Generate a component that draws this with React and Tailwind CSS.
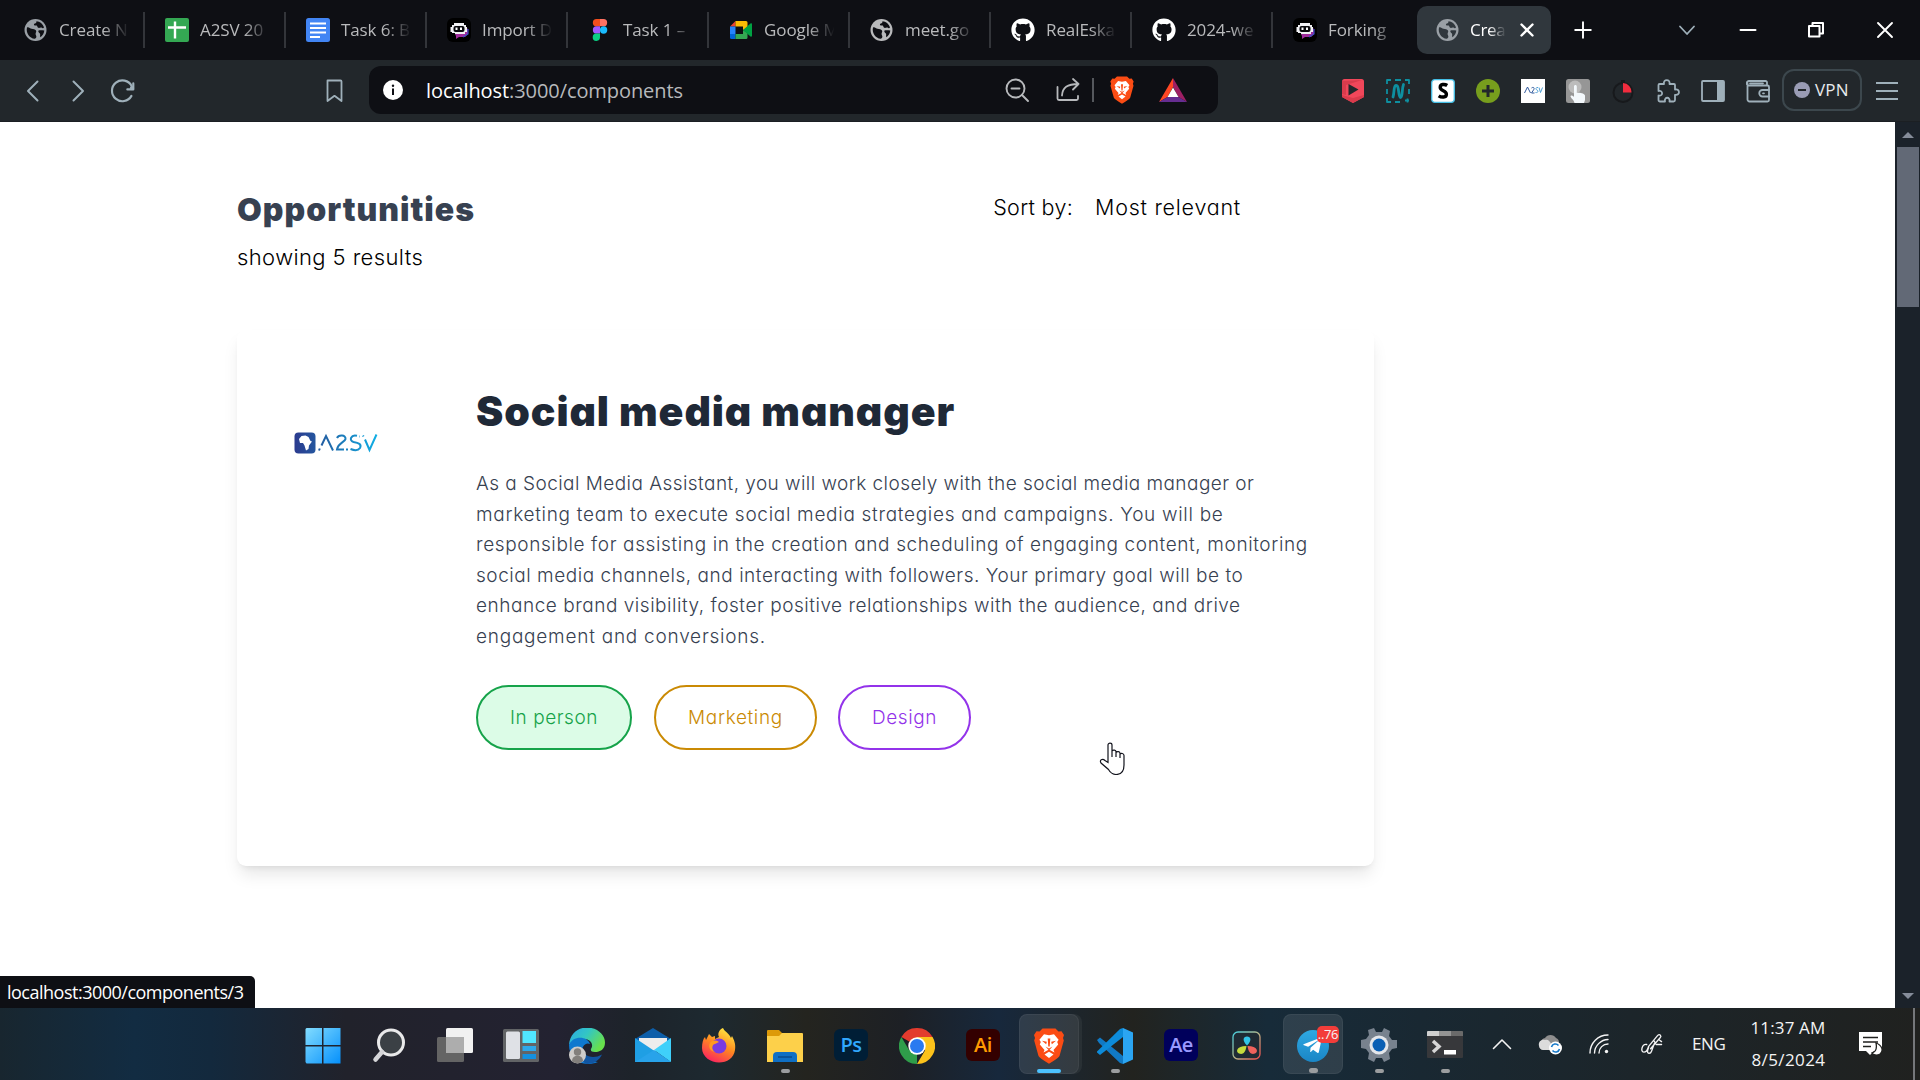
import React from "react";
import { FaGithub, FaTelegramPlane } from "react-icons/fa";

const Globe = ({ color = "#9aa0a6", bg = "#0e0f14" }) => (
  <svg viewBox="0 0 24 24" className="size-6 shrink-0">
    <circle cx="11.500" cy="12" r="11" fill={color} />
    <path d="M3 9.500c1.500-1 3 .8 4.500 1.300 2 .7 3.500.2 4.500 1.700.8 1.400-.6 2.300-.4 3.700.2 1.300 1.200 1.800.6 3.300-.4 1-1.500 1.300-1.500 1.300C5.500 20.300 1.700 15 3 9.500z" fill={bg} />
    <path d="M12.500 3.200c3.500.3 6.300 2.500 7.500 6-.5 1.400-1.600 1-2.500.4-1-.6-2 .6-3.200.2-1.300-.4-.6-1.600-1.600-2.200-1-.6-2.400.4-2.800-.9-.3-1.400 1.900-1.200 2.300-2z" fill={bg} />
    <path d="M14.500 12.500c1.500-.5 4-.2 5.800 0-.3 2.600-1.500 5-3.800 6.700-1-1.200.2-2.400-.6-3.600-.6-.9-2.200-1.800-1.400-3.100z" fill={bg} />
  </svg>
);

const Sheets = () => (
  <svg viewBox="0 0 24 24" className="size-6 shrink-0">
    <rect width="24" height="24" rx="2" fill="#34a853" />
    <path d="M10 3.500v17M3 9.500h18" stroke="#fff" strokeWidth="2.400" />
  </svg>
);
const Docs = () => (
  <svg viewBox="0 0 24 24" className="size-6 shrink-0">
    <rect width="24" height="24" rx="2.500" fill="#4285f4" />
    <path d="M4 5.500h16M4 10h16M4 14.500h16M4 19h10" stroke="#fff" strokeWidth="2" />
  </svg>
);
const Bot = () => (
  <svg viewBox="0 0 24 24" className="size-6 shrink-0">
    <rect width="24" height="24" rx="6" fill="#000" />
    <path d="M8 16h9l4-6v6l-3 3h-6l-3 2v-3z" fill="#a02c9c" />
    <path d="M16 19l5-3v-5" stroke="#3a4fc4" strokeWidth="1.200" fill="none" />
    <path d="M7 5h10v2h2v2h1v5h-2v2H8v-1H5v-1H3.500V9H5V7h2z" fill="#f1f1f4" />
    <rect x="6.500" y="8" width="11" height="6" rx="2" fill="#09090c" />
    <path d="M9.500 9.500v2.500M14 9.500v2.500" stroke="#fff" strokeWidth="2" />
  </svg>
);
const Figma = () => (
  <svg viewBox="0 0 24 24" className="size-6 shrink-0">
    <path d="M12 1H8.500a3.600 3.600 0 0 0 0 7.300H12z" fill="#f24e1e" />
    <path d="M12 1h3.500a3.600 3.600 0 0 1 0 7.300H12z" fill="#ff7262" />
    <path d="M12 8.300H8.500a3.600 3.600 0 0 0 0 7.300H12z" fill="#a259ff" />
    <circle cx="15.600" cy="12" r="3.650" fill="#1abcfe" />
    <path d="M12 15.600H8.500a3.650 3.650 0 1 0 3.500 3.700z" fill="#0acf83" />
  </svg>
);
const Meet = () => (
  <svg viewBox="0 0 24 24" className="size-6 shrink-0">
    <path d="M1 8.500L6.500 3v5.500z" fill="#ea4335" />
    <path d="M6.500 3H17a1.500 1.500 0 0 1 1.500 1.500V10L14 12V8.500H6.500z" fill="#fbbc04" />
    <path d="M1 8.500h5.500v7.500H1z" fill="#2684fc" />
    <path d="M1 16h5.500v5h-4A1.500 1.500 0 0 1 1 19.500z" fill="#0066da" />
    <path d="M6.500 16H14v-4l4.500 3v4.500A1.500 1.500 0 0 1 17 21H6.500z" fill="#34a853" />
    <path d="M14 12l7.500-6.500c.7-.5 1.500 0 1.500.7v11.600c0 .7-.8 1.200-1.500.7z" fill="#00a243" />
  </svg>
);
const Hub = () => <FaGithub className="size-6 shrink-0 text-white" />;

const tabs = [
  [Globe, "Create N"],
  [Sheets, "A2SV 20"],
  [Docs, "Task 6: B"],
  [Bot, "Import D"],
  [Figma, "Task 1 –"],
  [Meet, "Google M"],
  [() => <Globe color="#b9babc" />, "meet.go"],
  [Hub, "RealEska"],
  [Hub, "2024-we"],
  [Bot, "Forking"],
];

function Line({ d, className, w = 1.6, box = "0 0 24 24", children }) {
  return (
    <svg viewBox={box} className={`shrink-0 ${className}`} fill="none" stroke="currentColor" strokeWidth={w} strokeLinecap="round" strokeLinejoin="round">
      {d && <path d={d} />}
      {children}
    </svg>
  );
}

function TabStrip() {
  return (
    <div className="flex h-[60px] shrink-0 items-center bg-[#0e0f14] pl-1 text-white">
      {tabs.map(([Icon, label], i) => (
        <div key={label} className={`flex h-9 w-[141px] shrink-0 items-center border-r-2 pl-5 ${i === 9 ? "border-transparent" : "border-[#33353a]"}`}>
          <Icon />
          <div className="ml-[11px] w-[76px] text-[17px] tracking-[-0.1px] whitespace-nowrap text-[#b9babc] [mask-image:linear-gradient(to_right,black_58%,transparent_93%)]">
            {label}
          </div>
        </div>
      ))}
      <div className="ml-[3px] flex h-12 w-[134px] shrink-0 items-center rounded-[10px] bg-[#30373d] pl-[19px]">
        <Globe bg="#30373d" />
        <div className="ml-[10px] w-[38px] text-[17px] tracking-[-0.3px] whitespace-nowrap text-white [mask-image:linear-gradient(to_right,black_50%,transparent_95%)]">
          Crea
        </div>
        <Line d="M6.500 6.500l11 11M17.500 6.500l-11 11" w={2.4} className="ml-[7px] size-6" />
      </div>
      <Line d="M12 4.200v15.600M4.200 12h15.600" w={1.9} className="ml-5 size-6" />
      <Line d="M5 8.500l7 7.500 7-7.500" w={1.8} className="ml-[80px] size-6 text-[#9fb0ba]" />
      <Line d="M4.500 12h15" w={2} className="ml-[37px] size-6" />
      <Line className="ml-[44px] size-6" w={2}>
        <rect x="5" y="8" width="10.500" height="10.500" />
        <path d="M8.500 7.500V5h10.500v10.500h-3" />
      </Line>
      <Line d="M5 5l14 14M19 5L5 19" w={1.9} className="ml-[45px] size-6" />
    </div>
  );
}

function Toolbar() {
  return (
    <div className="flex h-[62px] shrink-0 items-center border-b border-[#1b1f23] bg-[#22272b] text-[#9fb0ba]">
      <Line d="M16.500 2.500L7 12l9.500 9.500" w={2} className="ml-[21px] size-6" />
      <Line d="M7.500 2.500L17 12l-9.500 9.500" w={2} className="ml-[21px] size-6" />
      <Line className="ml-5 size-[26px]" w={2}>
        <path d="M19.800 16.500A9.600 9.600 0 1 1 20 7.500" />
        <circle cx="20.300" cy="9.300" r="2" fill="currentColor" stroke="none" />
        <path d="M21.500 5v5.500H16" w={1} />
      </Line>
      <Line d="M4.500 1.500h13a1 1 0 0 1 1 1v19.500l-7-5.200-7 5.200V2.500z" w={1.8} className="ml-[187px] size-6" />
      <div className="mb-[1px] ml-[22px] flex h-12 w-[849px] shrink-0 items-center rounded-[12px] bg-[#0e0f14] pl-[14px] text-[#b7b9bc]">
        <svg viewBox="0 0 20 20" className="size-5">
          <circle cx="10" cy="10" r="10" fill="#fff" />
          <path d="M10 8.500v6.500" stroke="#0e0f14" strokeWidth="2" />
          <circle cx="10" cy="5.700" r="1.200" fill="#0e0f14" />
        </svg>
        <div className="ml-[23px] w-[558px] pt-[2px] text-[20px] leading-7 tracking-[-0.08px] whitespace-nowrap">
          <span className="text-white">localhost</span>:3000/components
        </div>
        <Line className="ml-[21px] size-6" w={1.9}>
          <circle cx="10.500" cy="10.500" r="9" />
          <path d="M17 17l6 6M6.500 10.500h8" />
        </Line>
        <Line className="ml-[27px] size-6" w={1.8}>
          <path d="M1.500 9v11.500A1.500 1.500 0 0 0 3 22h17.500a1.500 1.500 0 0 0 1.500-1.500V18" />
          <path d="M6 17.500C6.500 9.500 11 6 22.500 6M17 1l5.500 5-5.500 5.500" />
        </Line>
        <div className="ml-3 h-6 w-[2px] bg-[#55585d]" />
        <BraveLogo className="ml-[14px] size-7" />
        <svg viewBox="0 0 28 24" className="ml-[23px] h-6 w-7">
          <path d="M14 0L0 24l8.500-5L14 9z" fill="#ff4724" />
          <path d="M14 0l14 24-8.500-5L14 9z" fill="#9e1f63" />
          <path d="M0 24l8.500-5h11L28 24z" fill="#662d91" />
          <path d="M14 9.500l5.500 9.500h-11z" fill="#fff" />
        </svg>
      </div>
      <div className="ml-[123px] flex w-[429px] shrink-0 justify-between">
        <svg viewBox="0 0 24 24" className="size-6">
          <path d="M1 2.500Q1 0 3.500 0h17Q23 0 23 2.500V18l-11 6L1 18z" fill="#f0475a" />
          <path d="M1 16l11 3 11-3v2l-11 6-11-6zM1 2l20-1L5 6v10l-4-1z" fill="#d93b4c" />
          <path d="M7.500 5v11.500l10-6z" fill="#22272b" />
        </svg>
        <Line className="size-6 text-[#0e8fa0]" w={1.8}>
          <path d="M1 5V1h4M9 1h6M19 1h4v4M23 10v5M1 10v5M1 19v4h4M9 23h5M19 21.500h4M21.500 19.500v4" strokeLinecap="butt" />
          <path d="M7 18C8.500 13 7.500 8 9.500 6.500c4-2 2.500 12 5 12 2.500-.5 1-8 3-13" strokeWidth="2.800" />
        </Line>
        <svg viewBox="0 0 24 24" className="size-6">
          <rect x=".7" y=".7" width="22.600" height="22.600" rx="3" fill="#fff" stroke="#45bfe6" strokeWidth="1.300" />
          <path d="M16.200 6.500c-2.500-1.700-7-1.500-7 1.700 0 4 6.200 3 6.200 7 0 3.600-5 3.400-7.700 1.600" fill="none" stroke="#000" strokeWidth="3.400" />
        </svg>
        <svg viewBox="0 0 24 24" className="size-6">
          <circle cx="12" cy="12" r="12" fill="#779e1d" />
          <path d="M12 6v12M6 12h12" stroke="#22272b" strokeWidth="3" />
        </svg>
        <svg viewBox="0 0 24 24" className="size-6">
          <path d="M0 0h24v24H0z" fill="#fff" />
          <path d="M3.500 14L6.500 8l3 6M10.500 9c2-1.500 3.500 0 2 2l-2 3h3" fill="none" stroke="#30599d" strokeWidth="1" />
          <path d="M17 8.500c-2.500-.5-2.500 2-1 2.500s1.500 3-1.500 2.500M18 8.500l1.500 5 2-5" fill="none" stroke="#4d9ed4" strokeWidth="1" />
        </svg>
        <svg viewBox="0 0 24 24" className="size-6">
          <rect width="24" height="24" rx="2.500" fill="#969696" />
          <circle cx="9" cy="8" r="6.500" fill="#bcbcbc" />
          <path d="M8 7.500c0-2 2.800-2 2.800 0V14c2.500-1 8 .5 8.200 2.500V21l-1 3H8.500c-.5-3-3-4-4-6.500 0-1.500 2-1.500 3.500.5z" fill="#f3f8fc" />
        </svg>
        <svg viewBox="0 0 24 24" className="size-6">
          <circle cx="12" cy="13.500" r="9.500" fill="none" stroke="#17191c" strokeWidth="2" />
          <path d="M10 1h4v3h-4z" fill="#17191c" />
          <path d="M12 4a9 9 0 0 1 8.500 9.500H12z" fill="#f12c3e" />
        </svg>
        <Line className="size-6" w={1.8} d="M3.500 5H8C6.800-.3 14.700-.3 13.500 5H18a1 1 0 0 1 1 1v4.500c5.300-1.200 5.300 6.500 0 5.300V21a1.500 1.500 0 0 1-1.500 1.500h-4c1.200-5-5.700-5-4.500 0H4A1.500 1.500 0 0 1 2.500 21v-4.500c4.800 1.200 4.800-5.700 0-4.500V6a1 1 0 0 1 1-1z" />
        <svg viewBox="0 0 24 24" className="size-6">
          <rect x="1" y="2" width="22" height="20" rx="1" fill="none" stroke="currentColor" strokeWidth="1.800" />
          <path d="M16 2h7v20h-7z" fill="currentColor" />
        </svg>
        <Line className="size-6" w={1.800}>
          <path d="M21 6V3.500A1.500 1.500 0 0 0 19.500 2H3a1.800 1.800 0 0 0 0 4.500h18.500A1.500 1.500 0 0 1 23 8v13a1.500 1.500 0 0 1-1.500 1.500h-18A2 2 0 0 1 1.500 20.500V4M4 4.300h13" />
          <path d="M23 11h-6.500a3 3 0 0 0 0 6.500H23M17 14.300h1" />
        </Line>
      </div>
      <div className="mb-[1px] ml-[12px] flex h-[42px] w-[80px] shrink-0 items-center rounded-[12px] border-2 border-[#3c474d] pl-[10px]">
        <svg viewBox="0 0 16 16" className="size-4">
          <circle cx="8" cy="8" r="8" fill="#9a9cb5" />
          <path d="M4 8h8" stroke="#22272b" strokeWidth="2" />
        </svg>
        <span className="ml-[5px] text-[17px] leading-6 tracking-[0.2px] text-[#e8eaec]">VPN</span>
      </div>
      <div className="ml-[14px] flex h-[18px] w-[22px] flex-col justify-between">
        <div className="h-[2px] bg-current" /><div className="h-[2px] bg-current" /><div className="h-[2px] bg-current" />
      </div>
    </div>
  );
}

function BraveLogo({ className }) {
  return (
    <svg viewBox="0 0 36 36" className={className}>
      <path d="M11.500.5h13l3 3 3-.3L33 7l-1 3 .8 2.500L28.500 28Q27.500 30 18 35.800 8.500 30 7.500 28L3.200 12.500 4 10 3 7l2.500-3.800 3 .3z" fill="#fb4c14" />
      <path d="M18 7.300l5-1 4.600 5.500-1.400 2.200 1 2.500-4.700 5.500 1 2.500L18 21.600l-5.500 2.900 1-2.500-4.700-5.500 1-2.500-1.400-2.200L13 6.300z" fill="#fff" />
      <path d="M18 23.800l4.500 2.700L18 30l-4.500-3.500z" fill="#fff" />
      <path d="M11 12.800l4.800 1-.6 2.400zM25 12.800l-4.800 1 .6 2.400zM16.700 10.500h2.600l-.6 8h-1.400zM14.500 18.500l3.500 1.900 3.500-1.900-3.500 4z" fill="#fb4c14" />
    </svg>
  );
}

function A2svLogo() {
  return (
    <svg viewBox="0 0 84 22" className="h-[22px] w-[84px]">
      <defs>
        <linearGradient id="a2sv" gradientUnits="userSpaceOnUse" x1="0" x2="84" y1="0" y2="0">
          <stop offset="0" stopColor="#2b3a8e" />
          <stop offset=".4" stopColor="#2166a8" />
          <stop offset="1" stopColor="#10b0e6" />
        </linearGradient>
      </defs>
      <rect x=".5" y=".5" width="21" height="21" rx="4" fill="url(#a2sv)" />
      <path d="M5 7l2.500-3 4-.5 3 1.500 2 4 1.500.5-3 4-.5 3.500L12 18.500l-1.500-5L9 11H6z" fill="#fff" />
      <g fill="none" stroke="url(#a2sv)" strokeWidth="2">
        <path d="M25 18.500l.8-2M27.500 13.500L32 4l7 14.500" />
        <path d="M43 6c1.500-3.500 9-3.500 8.500 1-.5 3-7.500 4-8.500 10.500h7M52 17.500h2" />
        <path d="M66 4.500h-.5M63 3.800c-6-1.500-8.500 4.500-3.500 6.200 5 1 8.500 2 6.500 6-2 3-7 2-9.500 1" />
        <path d="M69 3.500l.5 1M71 7.500l4.500 10.500 7-15.500" />
      </g>
    </svg>
  );
}

const description = [
  ["As a Social Media Assistant, you will work closely with the social media manager or", "tracking-[0.45px]"],
  ["marketing team to execute social media strategies and campaigns. You will be", "tracking-[0.7px]"],
  ["responsible for assisting in the creation and scheduling of engaging content, monitoring", "tracking-[0.62px]"],
  ["social media channels, and interacting with followers. Your primary goal will be to", "tracking-[0.54px]"],
  ["enhance brand visibility, foster positive relationships with the audience, and drive", "tracking-[0.53px]"],
  ["engagement and conversions.", "tracking-[0.76px]"],
];

function Page() {
  return (
    <div className="flex h-[886px] shrink-0">
      <main className="relative flex flex-1 flex-col overflow-hidden bg-white pl-[237px] font-['Inter',sans-serif] [font-feature-settings:'cv11']">
        <div className="mt-[66px] flex w-[1004px] justify-between">
          <div>
            <h1 className="text-[32px] leading-[44px] font-black tracking-[1px] text-[#374151]">Opportunities</h1>
            <p className="mt-[3px] text-[22px] leading-[44px] font-light tracking-[0.4px] text-black">showing 5 results</p>
          </div>
          <div className="flex h-[38px] items-center gap-[22px] text-[21.500px] font-light text-black">
            <span className="tracking-[0.3px]">Sort by:</span>
            <span className="tracking-[0.76px]">Most relevant</span>
          </div>
        </div>
        <section className="mt-[51px] flex h-[536px] w-[1137px] rounded-[9px] bg-white shadow-[0_11px_17px_-3px_rgb(0_0_0/0.1),0_4px_7px_-4px_rgb(0_0_0/0.1)]">
          <div className="w-[239px] pt-[102px] pl-[57px]"><A2svLogo /></div>
          <div className="pt-[55px]">
            <h2 className="text-[41px] leading-[52px] font-black tracking-[0.92px] whitespace-nowrap text-[#1f2937]">Social media manager</h2>
            <div className="mt-[32px] text-[19px] leading-[30.600px] font-light whitespace-nowrap text-[#374151]">
              {description.map(([t, c]) => (
                <div key={t}><span className={c}>{t}</span></div>
              ))}
            </div>
            <div className="mt-[32px] flex gap-[22px] text-[19px] font-light">
              <span className="flex h-[65px] w-[156px] items-center justify-center rounded-full border-2 border-[#16a34a] bg-[#dcfce7] pt-[2px] tracking-[0.55px] text-[#16a34a]">In person</span>
              <span className="flex h-[65px] w-[163px] items-center justify-center rounded-full border-2 border-[#ca8a04] pt-[2px] tracking-[0.65px] text-[#ca8a04]">Marketing</span>
              <span className="-ml-px flex h-[65px] w-[133px] items-center justify-center rounded-full border-2 border-[#9333ea] pt-[2px] tracking-[0.55px] text-[#9333ea]">Design</span>
            </div>
          </div>
        </section>
        <svg viewBox="0 0 26 33" className="absolute top-[620px] left-[1099px] h-[33px] w-[26px]">
          <path d="M9 20.500V3c0-2.500 4-2.500 4 0v12V9c1-1.500 4-1 4 .8V15v-4.500c1-1.500 4-1 4 .8V16v-4c1-1 4-.8 4 1.500v9.500c0 12-12 11.500-15.500 4.500L2 21c-2-3 1.500-5 4-2.500z" fill="#fff" stroke="#12131c" strokeWidth="1.200" />
        </svg>
        <div className="absolute bottom-0 left-0 flex h-8 w-[255px] items-center rounded-tr-[5px] bg-[#0e0f14] pl-[7px] font-['Open_Sans',sans-serif] text-[18px] tracking-[-0.5px] whitespace-nowrap text-white">
          localhost:3000/components/3
        </div>
      </main>
      <div className="flex w-[25px] shrink-0 flex-col items-center justify-between bg-[#1b222a] pt-[10px] pb-[9px]">
        <div className="flex flex-col items-center">
          <svg viewBox="0 0 12 6" className="h-[6px] w-3"><path d="M0 6l6-6 6 6z" fill="#858c99" /></svg>
          <div className="mt-[9px] h-[160px] w-[22px] bg-[#626976]" />
        </div>
        <svg viewBox="0 0 12 6" className="h-[6px] w-3"><path d="M0 0l6 6 6-6z" fill="#858c99" /></svg>
      </div>
    </div>
  );
}

const Adobe = ({ bg, fg, children }) => (
  <div className={`mb-[3px] flex h-8 w-[34px] items-center justify-center rounded-md text-[20px] leading-none font-semibold tracking-tight ${bg} ${fg}`}>{children}</div>
);

const I = ({ children }) => <svg viewBox="0 0 36 36" className="size-9">{children}</svg>;

const apps = [
  { icon: <I><defs><linearGradient id="win" x2="1" y2="1"><stop stopColor="#82dcff" /><stop offset="1" stopColor="#0590fb" /></linearGradient></defs><path d="M1.500 0H17v17H.5V1zM18.500 0h17v17h-17zM.5 18.500H17v17H1.500L.5 34zM18.500 18.500h17v17h-17z" fill="url(#win)" /></I> },
  { icon: <I><circle cx="20" cy="14.500" r="12.500" fill="#3b4045" stroke="#e9e9ea" strokeWidth="3" /><path d="M11 24l-6.500 7.500" stroke="#d5d5d8" strokeWidth="4.500" strokeLinecap="round" /></I> },
  { icon: <I><rect x="0" y="9" width="27" height="25" rx="1.500" fill="#646464" /><rect x="9" y="0" width="27" height="25" rx="1.500" fill="#f1f1f1" /><path d="M9 9h18v16H9z" fill="#adadad" /></I> },
  { icon: <I><rect x="0" y="1" width="36" height="33" rx="1.500" fill="#626466" /><rect x="3" y="3.500" width="14" height="27.500" rx="1.500" fill="#dfe1e6" /><path d="M19.500 3H33v12H19.500z" fill="#50e6ff" /><path d="M19.500 18H33v5H19.500z" fill="#2ea8ea" /><path d="M19.500 26H33v5H19.500z" fill="#1490df" /></I> },
  { icon: <I><defs><linearGradient id="edg" x2="1" y2=".5"><stop stopColor="#2aa8e8" /><stop offset=".5" stopColor="#33c6c4" /><stop offset="1" stopColor="#68e04c" /></linearGradient></defs><path d="M0 17C1 5 9-.5 18.500-.5 29 0 36 7 36 14.500c0 7-5 9.500-10 9.500-4 0-5-2-3.500-4 2-4-1-9-7.500-9S2 14 0 17z" fill="url(#edg)" /><path d="M0 17c3-9 18-10 21-1-4-2-9 2-7 8 2 5 9 9.500 15 10-4 1.500-7 2-10 2C7 36 0 27 0 17z" fill="#0f79cf" /><path d="M14 19c-2 9 10 13 19 7.500C30 33 24 36 18 36c-8-3-9-13-4-17z" fill="#1155a2" /><circle cx="8.500" cy="27" r="8.500" fill="#ceccca" /><circle cx="8.500" cy="24" r="3.700" fill="#827f7c" /><path d="M3 33c0-7 11-7 11 0-3 3-8 3-11 0z" fill="#827f7c" /></I> },
  { icon: <I><path d="M0 11L18 0l18 11v10H0z" fill="#0d5ea9" /><path d="M4 10h28v10L18 24 4 18z" fill="#ededed" /><path d="M0 10l36 24H0z" fill="#1f9fe4" /><path d="M36 10v24L19 22z" fill="#3fd0fa" /><path d="M0 34l19-12 17 12z" fill="#28a3ea" /></I> },
  { icon: <I><defs><linearGradient id="ffx" x1=".8" x2=".3" y2="1"><stop stopColor="#ffee45" /><stop offset=".5" stopColor="#ff8a1f" /><stop offset="1" stopColor="#fb2260" /></linearGradient></defs><path d="M22 0c1 3 6 5 8 10l1-2c2 4 4 8 3 14-1 8-8 12.500-16 12.500S1 29 1 20c0-5 1-9 3-11l1 3 3-6 3 3 3-1v3l4-2c-2-4 1-8 4-9z" fill="url(#ffx)" /><circle cx="18" cy="18" r="7.500" fill="#7a3be0" /><path d="M9 15c3-3 6-3 9-1l-4 2c-3 0-4 6 0 8-5-1-7-5-5-9z" fill="#ff9a20" /></I> },
  { dot: true, icon: <I><path d="M0 3q0-1 1-1h11l3 3v5H0z" fill="#dd9a08" /><path d="M0 8h12l3-3h20q1 0 1 1v28H0z" fill="#fdd04a" /><path d="M6 34v-6q0-4 4-4h16q4 0 4 4v6z" fill="#0f6fc4" /><path d="M11 29h14" stroke="#0a4a8c" strokeWidth="1.500" /></I> },
  { icon: <Adobe bg="bg-[#001e36]" fg="text-[#31a8ff]">Ps</Adobe> },
  { icon: <I><path d="M18 18L2.410 9A18 18 0 0 1 33.590 9z" fill="#e33b2e" /><path d="M18 18L18 36A18 18 0 0 1 2.410 9L10 22z" fill="#2f9d4a" /><path d="M18 9h15.590A18 18 0 0 1 18 36l8-13.500z" fill="#fcc21b" /><circle cx="18" cy="18" r="8.700" fill="#fff" /><circle cx="18" cy="18" r="7" fill="#2a7af0" /></I> },
  { icon: <Adobe bg="bg-[#330000]" fg="text-[#ff9a00]">Ai</Adobe> },
  { active: true, icon: <BraveLogo className="size-9" /> },
  { dot: true, icon: <I><path d="M26 0v36l-3-1L2 15l-2-3 3-2.500L26 28z" fill="#1179c4" /><path d="M26 9L3 27l-3-2.500v-1L23 1l3-1z" fill="#0d8bd9" /><path d="M26 0l10 4.500v27L26 36z" fill="#2ba5f2" /></I> },
  { icon: <Adobe bg="bg-[#00005b]" fg="text-[#9999ff]">Ae</Adobe> },
  { icon: <I><defs><linearGradient id="dvr" x2="1" y2="1"><stop stopColor="#46d0e0" /><stop offset=".5" stopColor="#b7b78b" /><stop offset="1" stopColor="#f04a4a" /></linearGradient></defs><rect x="4" y="4" width="27" height="27" rx="5" fill="#1f2b34" stroke="url(#dvr)" strokeWidth="1.300" /><path d="M18 17.500c-5-5-4-9 0-9s5 4 0 9z" fill="#32c4e8" /><path d="M17.500 18c-1 7-4 9-7.500 7.500s-3-7.500 7.500-7.500z" fill="#c5dc3d" /><path d="M18.500 18c1 7 4 9 7.500 7.500s3-7.500-7.500-7.500z" fill="#f0625c" /></I> },
  { dot: true, telegram: true, icon: <div className="flex size-8 items-center justify-center rounded-full bg-linear-to-b from-[#2fa9e2] to-[#1a86c6] pr-0.5"><FaTelegramPlane className="size-[21px] text-white" /></div> },
  { dot: true, icon: <I><path d="M13 0l2 4h6l2-4 6 3-1 5 3 4h5v8l-5 1-3 4 1 6-6 3-2-4h-6l-2 4-6-3 1-6-3-4-5-1v-8l5-1 3-4-1-5z" fill="#78828e" /><circle cx="18" cy="17" r="9.500" fill="#e4e6ea" /><circle cx="18" cy="17" r="6.500" fill="#0a5fb4" /></I> },
  { dot: true, icon: <I><path d="M0 4q0-1 1-1h34q1 0 1 1v25q0 1-1 1H1q-1 0-1-1z" fill="#37383b" /><path d="M0 8V4q0-1 1-1h11v5z" fill="#cfcfcf" /><path d="M12 3h12v5H12z" fill="#949494" /><path d="M24 3h11q1 0 1 1v4H24z" fill="#6a6a6a" /><path d="M6 13l6 5.500L6 24" fill="none" stroke="#d6d6d6" strokeWidth="3.500" /><path d="M17 22h12v4.500H17z" fill="#fff" /></I> },
];

function Taskbar() {
  return (
    <footer className="flex h-[72px] shrink-0 items-center bg-[linear-gradient(90deg,#18262f_0%,#122c42_7%,#13293d_11%,#21222b_18%,#232231_29%,#1d232a_33%,#1d2930_37%,#24241f_42%,#1d2025_47%,#17283c_52%,#22231f_59%,#172b39_66%,#192832_74%,#20211f_100%)] pl-[290px] text-[#f4f4f4]">
      {apps.map((a, i) => (
        <div key={i} className="flex h-[72px] w-[66px] shrink-0 items-center justify-center">
          <div className={`relative flex h-[60px] w-[60px] flex-col items-center rounded-lg border pt-[13px] ${a.active ? "border-white/5 bg-white/10 shadow-[3px_0_0_rgb(255_255_255/0.05)]" : a.telegram ? "border-white/5 bg-white/10" : "border-transparent"}`}>
            <div className="flex h-9 items-center justify-center">{a.icon}</div>
            {a.dot && <div className="mt-[5px] h-[5px] w-[9px] rounded-full bg-[#9b9d9f]" />}
            {a.active && <div className="mt-[5px] h-[5px] w-6 rounded-full bg-[#4cc2ff]" />}
            {a.telegram && <div className="absolute top-[11px] right-[3px] h-[17px] w-[22px] rounded-[5px] bg-[#f33d3a] text-center text-[13px] leading-[17px] tracking-tight">..76</div>}
          </div>
        </div>
      ))}
      <Line d="M3.500 16.500L12 8l8.500 8.500" w={1.600} className="ml-3 size-6" />
      <svg viewBox="0 0 24 22" className="ml-[24px] h-[22px] w-6">
        <path d="M4 15a6 6 0 0 1 3-10 6.500 6.500 0 0 1 11 0c4 1 4 8 0 10z" fill="#8e8e8e" />
        <path d="M1 13c-1-5 3-7 6-6 2-1 6 1 6 5v5H5c-2 0-4-2-4-4z" fill="#dcdcdc" />
        <circle cx="17.500" cy="15" r="6.500" fill="#fff" />
        <path d="M13.500 14a4 4 0 0 1 7-1.500M21.500 16a4 4 0 0 1-7 1.500" stroke="#1779c9" strokeWidth="1.600" fill="none" />
      </svg>
      <Line className="ml-[27px] size-5" w={1.400} box="0 0 20 20">
        <path d="M1 19C1 9 9 1 19 1M5.500 19C5.500 12 12 5.500 19 5.500M10 19c0-5 4-9 9-9" /><circle cx="17.500" cy="17.500" r="1.700" fill="currentColor" stroke="none" />
      </Line>
      <Line className="ml-[31px] size-[23px]" w={1.400} d="M7 12c-5-1-7 8-3 8s4-4 5-6L18.500 2.500c2-2 4.500.5 2.500 2.500L11 16.500M9 15l-1 3c-1 4 3 4 4 1l3-8M14.500 8L17 12h5.500M20.500 7.500L22.500 9" />
      <span className="ml-[29px] text-[17px] tracking-[-0.4px]">ENG</span>
      <div className="ml-[25px] flex w-[76px] flex-col items-start text-[17px] leading-8 whitespace-nowrap">
        <span className="tracking-[0.15px]">11:37 AM</span>
        <span className="pl-px tracking-[0.4px]">8/5/2024</span>
      </div>
      <svg viewBox="0 0 25 26" className="ml-[32px] h-[26px] w-[25px]">
        <path d="M1 1h23v19h-8l-4 4-4-4H1z" fill="#fff" />
        <path d="M5 6.500h15M5 11h15M5 15.500h8" stroke="#20211f" strokeWidth="1.500" />
        <path d="M18 12c6 2 8 8 4 11-3 2-7 1-8-1 4-1 5-5 4-10z" fill="#fff" stroke="#20211f" strokeWidth="1.300" />
      </svg>
      <div className="ml-[30px] h-[72px] w-[2px] bg-[#75777a]" />
    </footer>
  );
}

export default function App() {
  return (
    <div className="flex h-[1080px] w-[1920px] flex-col overflow-hidden bg-white font-['Open_Sans',sans-serif]">
      <TabStrip />
      <Toolbar />
      <Page />
      <Taskbar />
    </div>
  );
}
